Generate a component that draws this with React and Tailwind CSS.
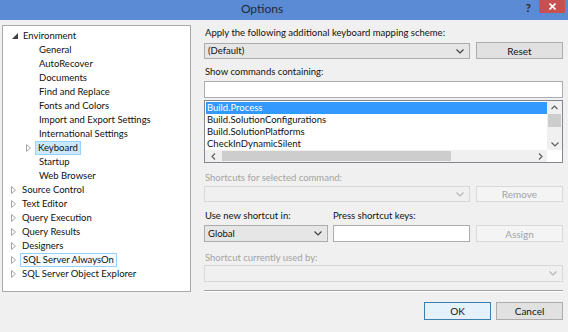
import React from "react";

const F = { fontFamily: 'Lato, "Noto Sans", sans-serif' };

function Chevron({ color = "#404040" }) {
  return (
    <svg width="8" height="5" viewBox="0 0 8 5" className="shrink-0">
      <path d="M0.5 0.5 L4 4 L7.5 0.5" fill="none" stroke={color} strokeWidth="1.2" />
    </svg>
  );
}

function Tri({ open }) {
  if (open)
    return (
      <svg width="6" height="6" viewBox="0 0 6 6">
        <path d="M6 0 L6 6 L0 6 Z" fill="#404040" />
      </svg>
    );
  return (
    <svg width="5" height="8" viewBox="0 0 5 8">
      <path d="M0.5 0.5 L4.5 4 L0.5 7.5 Z" fill="none" stroke="#a6a6a6" strokeWidth="1" />
    </svg>
  );
}

const children = [
  "General",
  "AutoRecover",
  "Documents",
  "Find and Replace",
  "Fonts and Colors",
  "Import and Export Settings",
  "International Settings",
];
const groups = [
  "Source Control",
  "Text Editor",
  "Query Execution",
  "Query Results",
  "Designers",
];

function Btn({ children, disabled, focused, className = "" }) {
  return (
    <div
      className={
        "flex items-center justify-center border text-[10px] " +
        (disabled
          ? "border-[#d9d9d9] bg-[#f4f4f4] text-[#a3a3a3] "
          : focused
          ? "border-[#3c7fb1] bg-[#e5f1fb] text-[#111] "
          : "border-[#adadad] bg-[#e1e1e1] text-[#111] ") +
        className
      }
    >
      {children}
    </div>
  );
}

export default function App() {
  return (
    <div className="w-[568px] h-[332px] bg-[#f0f0f0] flex flex-col overflow-hidden text-[#111]" style={F}>
      {/* title bar */}
      <div className="h-[20px] bg-[#5b8bd4] flex items-start relative shrink-0">
        <div className="flex-1 text-center text-[12px] leading-[18px] text-[#1d2a3a] pr-[44px]">Options</div>
        <div className="absolute right-[37px] top-[1px] text-[12px] font-bold text-[#2b2b2b] leading-[14px]">?</div>
        <div className="absolute right-[3px] top-0 w-[26px] h-[13px] bg-[#c75050] flex items-center justify-center">
          <svg width="7" height="7" viewBox="0 0 7 7">
            <path d="M0.5 0.5 L6.5 6.5 M6.5 0.5 L0.5 6.5" stroke="#fff" strokeWidth="1.6" />
          </svg>
        </div>
      </div>

      <div className="flex flex-1 pt-[5px]">
        {/* tree */}
        <div className="ml-[2px] w-[189px] h-[267px] border border-[#a9a9a9] bg-white pt-[3px] text-[9.5px] leading-[14px] shrink-0">
          <div className="flex items-center h-[14px]">
            <div className="w-[20px] flex justify-end pr-[5px]"><Tri open /></div>
            <span>Environment</span>
          </div>
          {children.map((c) => (
            <div key={c} className="h-[14px] pl-[36px]">{c}</div>
          ))}
          <div className="flex items-center h-[14px]">
            <div className="w-[33px] flex justify-end pr-[5px]"><Tri /></div>
            <span className="bg-[#cce8ff] border border-[#99d1ff] px-[2px] -ml-[1px] leading-[12px]">Keyboard</span>
          </div>
          <div className="h-[14px] pl-[36px]">Startup</div>
          <div className="h-[14px] pl-[36px]">Web Browser</div>
          {groups.map((g) => (
            <div key={g} className="flex items-center h-[14px]">
              <div className="w-[20px] flex justify-end pr-[7px]"><Tri /></div>
              <span className="-ml-[1px]">{g}</span>
            </div>
          ))}
          <div className="flex items-center h-[14px]">
            <div className="w-[20px] flex justify-end pr-[7px]"><Tri /></div>
            <span className="border border-[#99d1ff] bg-[#f5faff] px-[2px] -ml-[3px] leading-[12px]">SQL Server AlwaysOn</span>
          </div>
          <div className="flex items-center h-[14px]">
            <div className="w-[20px] flex justify-end pr-[7px]"><Tri /></div>
            <span className="-ml-[1px]">SQL Server Object Explorer</span>
          </div>
        </div>

        {/* right */}
        <div className="ml-[13px] w-[359px] flex flex-col text-[9.5px] leading-[14px]">
          <div className="mt-[1px] h-[14px] pl-[1px]">Apply the following additional keyboard mapping scheme:</div>
          <div className="mt-[3px] flex gap-[6px]">
            <div className="w-[266px] h-[16px] border border-[#acacac] bg-[#e6e6e6] flex items-center justify-between px-[3px] pr-[5px]">
              <span>(Default)</span>
              <Chevron />
            </div>
            <Btn className="w-[87px] h-[17px] -mt-[1px]">Reset</Btn>
          </div>
          <div className="mt-[6px] h-[14px] pl-[1px]">Show commands containing:</div>
          <div className="mt-[2px] h-[17px] border border-[#abadb3] bg-white"></div>
          {/* list */}
          <div className="mt-[2px] h-[63px] border border-[#828790] bg-white flex flex-col">
            <div className="flex flex-1">
              <div className="flex-1 pl-[1px] pt-[1px]">
                <div className="h-[12px] leading-[12px] bg-[#3399ff] text-white pl-[1px]">Build.Process</div>
                <div className="h-[12px] leading-[12px] pl-[1px]">Build.SolutionConfigurations</div>
                <div className="h-[12px] leading-[12px] pl-[1px]">Build.SolutionPlatforms</div>
                <div className="h-[12px] leading-[12px] pl-[1px]">CheckInDynamicSilent</div>
              </div>
              <div className="w-[15px] bg-[#f0f0f0] flex flex-col items-center">
                <div className="h-[13px] flex items-center justify-center">
                  <svg width="7" height="5" viewBox="0 0 7 5"><path d="M0.5 4 L3.5 1 L6.5 4" fill="none" stroke="#606060" strokeWidth="1.2" /></svg>
                </div>
                <div className="w-[13px] h-[13px] bg-[#cdcdcd]"></div>
                <div className="flex-1"></div>
                <div className="h-[12px] flex items-center justify-center">
                  <Chevron color="#606060" />
                </div>
              </div>
            </div>
            <div className="h-[12px] flex bg-[#f0f0f0] mr-[15px]">
              <div className="w-[17px] flex items-center justify-center">
                <svg width="5" height="7" viewBox="0 0 5 7"><path d="M4 0.5 L1 3.5 L4 6.5" fill="none" stroke="#606060" strokeWidth="1.2" /></svg>
              </div>
              <div className="w-[229px] h-[10px] mt-[1px] bg-[#cdcdcd]"></div>
              <div className="flex-1 flex items-center justify-end pr-[4px]">
                <svg width="5" height="7" viewBox="0 0 5 7"><path d="M1 0.5 L4 3.5 L1 6.5" fill="none" stroke="#606060" strokeWidth="1.2" /></svg>
              </div>
            </div>
          </div>

          <div className="mt-[8px] h-[14px] pl-[1px] text-[#a3a3a3]">Shortcuts for selected command:</div>
          <div className="mt-[1px] flex gap-[6px]">
            <div className="w-[266px] h-[16px] border border-[#d9d9d9] bg-[#f0f0f0] flex items-center justify-end pr-[5px]">
              <Chevron color="#b5b5b5" />
            </div>
            <Btn disabled className="w-[87px] h-[16px]">Remove</Btn>
          </div>

          <div className="mt-[7px] flex h-[14px]">
            <div className="w-[129px] pl-[1px]">Use new shortcut in:</div>
            <div>Press shortcut keys:</div>
          </div>
          <div className="mt-[2px] flex">
            <div className="w-[124px] h-[17px] border border-[#acacac] bg-[#e6e6e6] flex items-center justify-between px-[3px] pr-[5px]">
              <span>Global</span>
              <Chevron />
            </div>
            <div className="ml-[5px] w-[137px] h-[17px] border border-[#abadb3] bg-white"></div>
            <Btn disabled className="ml-[6px] w-[87px] h-[17px]">Assign</Btn>
          </div>

          <div className="mt-[9px] h-[14px] pl-[1px] text-[#a3a3a3]">Shortcut currently used by:</div>
          <div className="mt-[0px] h-[17px] border border-[#d9d9d9] bg-[#f0f0f0] flex items-center justify-end pr-[5px]">
            <Chevron color="#b5b5b5" />
          </div>

          <div className="mt-[8px] h-[2px] bg-[#a0a0a0] border-b border-white"></div>

          <div className="mt-[10px] flex justify-end gap-[5px]">
            <Btn focused className="w-[67px] h-[18px]">OK</Btn>
            <Btn className="w-[67px] h-[18px]">Cancel</Btn>
          </div>
        </div>
      </div>
    </div>
  );
}
